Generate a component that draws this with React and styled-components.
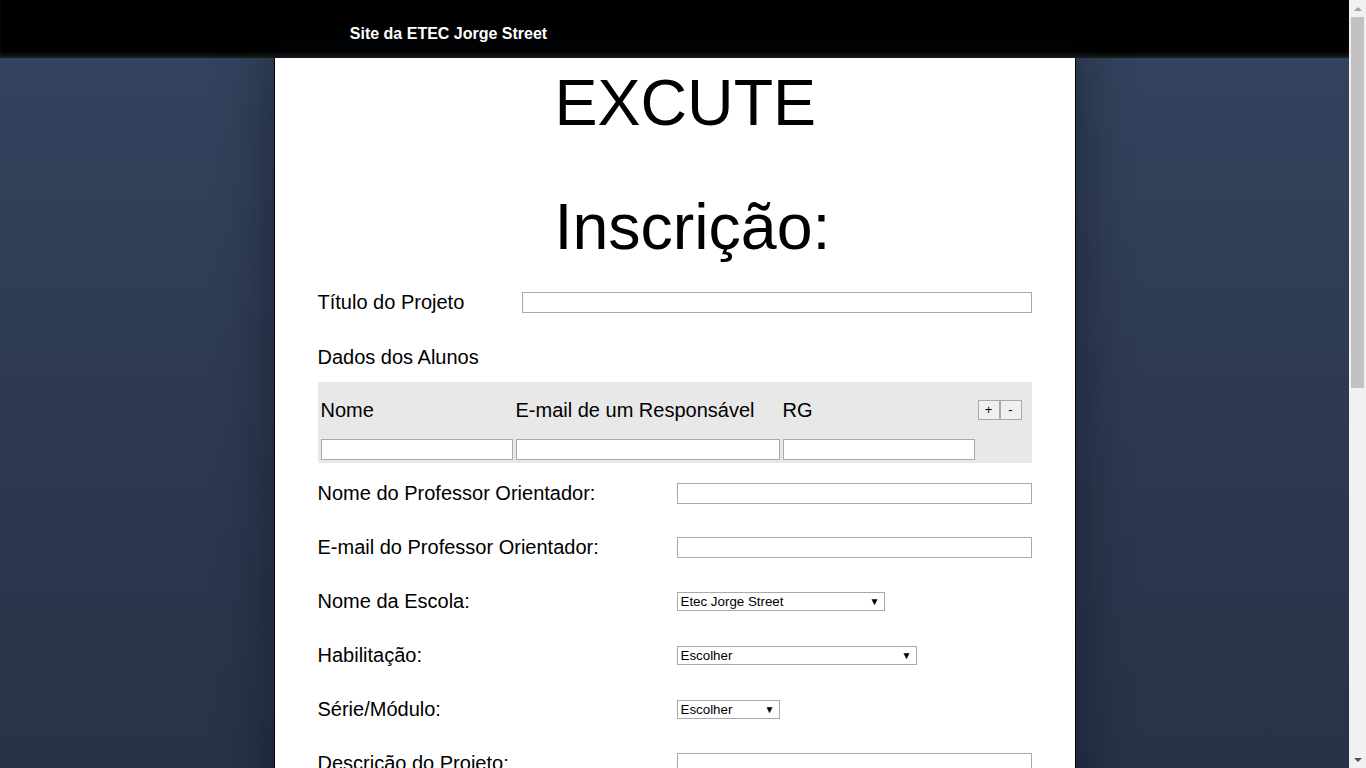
import React from "react";
import styled, { createGlobalStyle } from "styled-components";

const GlobalStyle = createGlobalStyle`
  body {
    margin: 0;
    font-family: "Liberation Sans", Arial, sans-serif;
    background: linear-gradient(180deg, #34445f 0%, #2e3a53 50%, #283248 100%) fixed;
    color: #000;
  }
`;

const Shell = styled.div`
  display: flex;
  align-items: flex-start;
`;

const Page = styled.div`
  flex: 1;
  min-width: 0;
`;

// stand-in for the browser's classic scrollbar
const ScrollRail = styled.div`
  position: sticky;
  top: 0;
  width: 17px;
  height: 100vh;
  flex-shrink: 0;
  display: flex;
  flex-direction: column;
  background: #f1f1f1;
`;

const RailButton = styled.div`
  height: 17px;
  display: flex;
  align-items: center;
  justify-content: center;
  flex-shrink: 0;

  &::before {
    content: "";
    border-left: 4px solid transparent;
    border-right: 4px solid transparent;
    ${(p) =>
      p.$down
        ? "border-top: 4px solid #505050;"
        : "border-bottom: 4px solid #a3a3a3;"}
  }
`;

const RailThumb = styled.div`
  height: 371px;
  margin: 0 2px;
  background: #c1c1c1;
`;

const RailSpace = styled.div`
  flex: 1;
`;

const TopBar = styled.header`
  height: 58px;
  background: #000;
  box-shadow: inset 0 -5px 6px -3px rgba(70, 70, 70, 0.6);
`;

const TopInner = styled.div`
  width: 802px;
  margin: 0 auto;
  padding-left: 36px;
  box-sizing: border-box;
`;

const Brand = styled.a`
  display: flex;
  align-items: center;
  justify-content: center;
  width: 278px;
  height: 53px;
  padding-top: 14px;
  box-sizing: border-box;
  background: #000;
  color: #fff;
  font-size: 16px;
  font-weight: 700;
  text-decoration: none;
`;

const Card = styled.main`
  width: 802px;
  margin: 0 auto;
  padding: 8px 43px 60px;
  box-sizing: border-box;
  background: #fff;
  border: 1px solid #000;
  border-top: 0;
  box-shadow: 0 0 40px 12px rgba(10, 14, 24, 0.35);
`;

const Title = styled.h1`
  margin: 0 0 ${(p) => p.$gap || 0}px;
  padding-left: 237px;
  font-size: 64.5px;
  font-weight: 400;
  line-height: 74px;
`;

const Row = styled.div`
  display: flex;
  align-items: ${(p) => (p.$top ? "flex-start" : "center")};
  min-height: 21px;
  margin-top: ${(p) => p.$mt}px;
`;

const Label = styled.label`
  width: ${(p) => p.$w || 359}px;
  flex-shrink: 0;
  font-size: 20px;
  line-height: 21px;
`;

const SectionLabel = styled.div`
  margin-top: ${(p) => p.$mt}px;
  font-size: 20px;
  line-height: 23px;
`;

const TextInput = styled.input`
  width: ${(p) => p.$w}px;
  height: 21px;
  box-sizing: border-box;
  border: 1px solid #a9a9a9;
  padding: 1px 3px;
  font-family: inherit;
  font-size: 13px;
  background: #fff;
  outline: none;
`;

const TextArea = styled.textarea`
  width: 355px;
  height: ${(p) => p.$h}px;
  box-sizing: border-box;
  border: 1px solid #a9a9a9;
  padding: 2px 3px;
  font-family: inherit;
  font-size: 13px;
  resize: none;
  outline: none;
`;

const StudentsTable = styled.div`
  display: grid;
  grid-template-columns: 192px 264px 192px 44px;
  grid-template-rows: 51px 21px;
  column-gap: 3px;
  row-gap: 3px;
  align-items: center;
  margin-top: 13px;
  padding: 3px;
  background: #e8e8e8;
`;

const ColHead = styled.div`
  font-size: 20px;
  line-height: 23px;
`;

const Buttons = styled.div`
  display: flex;
  margin-top: -2px;
`;

const SmallButton = styled.button`
  width: 22px;
  height: 20px;
  padding: 0;
  border: 1px solid #a9a9a9;
  background: #f0f0f0;
  color: #000;
  font-family: inherit;
  font-size: 13px;
  line-height: 18px;
`;

const SelectBox = styled.div`
  position: relative;
  width: ${(p) => p.$w}px;
  height: 19px;
`;

const Select = styled.select`
  appearance: none;
  width: 100%;
  height: 19px;
  box-sizing: border-box;
  border: 1px solid #a9a9a9;
  border-radius: 0;
  padding: 0 16px 0 3px;
  background: #fff;
  color: #000;
  font-family: inherit;
  font-size: 13.33px;
  line-height: 17px;
  outline: none;
`;

const Arrow = styled.span`
  position: absolute;
  right: 5px;
  top: 2px;
  font-size: 10px;
  line-height: 15px;
  pointer-events: none;
`;

const SubmitButton = styled.button`
  margin-top: 40px;
  padding: 6px 24px;
  border: 1px solid #a9a9a9;
  background: #f0f0f0;
  font-family: inherit;
  font-size: 18px;
`;

function Dropdown({ width, options }) {
  return (
    <SelectBox $w={width}>
      <Select defaultValue={options[0]}>
        {options.map((o) => (
          <option key={o}>{o}</option>
        ))}
      </Select>
      <Arrow>▼</Arrow>
    </SelectBox>
  );
}

export default function App() {
  return (
    <>
      <GlobalStyle />
      <Shell>
        <Page>
          <TopBar>
            <TopInner>
              <Brand href="#">Site da ETEC Jorge Street</Brand>
            </TopInner>
          </TopBar>

          <Card>
            <Title $gap={50}>EXCUTE</Title>
            <Title>Inscrição:</Title>

            <Row $mt={28}>
              <Label $w={204}>Título do Projeto</Label>
              <TextInput $w={510} />
            </Row>

            <SectionLabel $mt={33}>Dados dos Alunos</SectionLabel>

            <StudentsTable>
              <ColHead>Nome</ColHead>
              <ColHead>E-mail de um Responsável</ColHead>
              <ColHead>RG</ColHead>
              <Buttons>
                <SmallButton>+</SmallButton>
                <SmallButton>-</SmallButton>
              </Buttons>
              <TextInput $w={192} />
              <TextInput $w={264} />
              <TextInput $w={192} />
              <span />
            </StudentsTable>

            <Row $mt={20}>
              <Label>Nome do Professor Orientador:</Label>
              <TextInput $w={355} />
            </Row>
            <Row $mt={33}>
              <Label>E-mail do Professor Orientador:</Label>
              <TextInput $w={355} />
            </Row>
            <Row $mt={33}>
              <Label>Nome da Escola:</Label>
              <Dropdown width={208} options={["Etec Jorge Street"]} />
            </Row>
            <Row $mt={33}>
              <Label>Habilitação:</Label>
              <Dropdown width={240} options={["Escolher"]} />
            </Row>
            <Row $mt={33}>
              <Label>Série/Módulo:</Label>
              <Dropdown width={103} options={["Escolher"]} />
            </Row>
            <Row $mt={33} $top>
              <Label>Descrição do Projeto:</Label>
              <TextArea $h={220} />
            </Row>
            <Row $mt={33} $top>
              <Label>Materiais Necessários:</Label>
              <TextArea $h={160} />
            </Row>
            <Row $mt={33} $top>
              <Label>Observações:</Label>
              <TextArea $h={120} />
            </Row>
            <SubmitButton>Enviar</SubmitButton>
          </Card>
        </Page>

        <ScrollRail>
          <RailButton />
          <RailThumb />
          <RailSpace />
          <RailButton $down />
        </ScrollRail>
      </Shell>
    </>
  );
}
